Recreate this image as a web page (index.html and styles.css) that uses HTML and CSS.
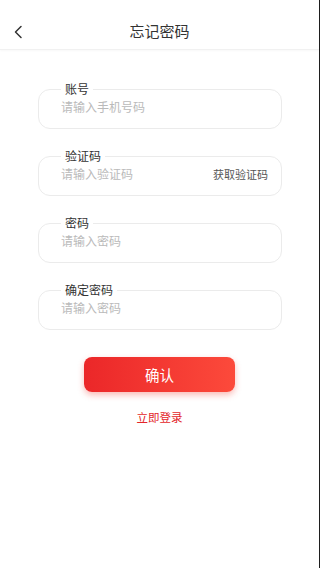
FILE: index.html
```html
<!DOCTYPE html>
<html lang="zh-CN">
<head>
    <meta charset="UTF-8">
    <meta name="viewport" content="width=device-width, initial-scale=1.0">
    <title>忘记密码</title>
    <link rel="stylesheet" href="styles.css">
</head>
<body>
    <div class="page">
        <!-- 顶部导航 -->
        <header class="nav-bar">
            <a class="back" href="#">
                <svg width="12" height="16" viewBox="0 0 12 16">
                    <polyline points="8,2.5 2.5,8 8,13.5" fill="none" stroke="#333" stroke-width="1.5" stroke-linecap="round" stroke-linejoin="round"/>
                </svg>
            </a>
            <h1 class="nav-title">忘记密码</h1>
        </header>

        <form class="form">
            <fieldset class="field">
                <legend>账号</legend>
                <div class="field-row">
                    <input type="text" placeholder="请输入手机号码">
                </div>
            </fieldset>

            <fieldset class="field">
                <legend>验证码</legend>
                <div class="field-row">
                    <input type="text" placeholder="请输入验证码">
                    <span class="get-code">获取验证码</span>
                </div>
            </fieldset>

            <fieldset class="field">
                <legend>密码</legend>
                <div class="field-row">
                    <input type="password" placeholder="请输入密码">
                </div>
            </fieldset>

            <fieldset class="field">
                <legend>确定密码</legend>
                <div class="field-row">
                    <input type="password" placeholder="请输入密码">
                </div>
            </fieldset>

            <button type="button" class="submit-btn">确认</button>
            <a class="login-link" href="#">立即登录</a>
        </form>
    </div>
</body>
</html>
```

FILE: styles.css
```css
body {
    margin: 0;
    font-family: "Noto Sans CJK SC", "Noto Sans", sans-serif;
    background-color: #fff;
    color: #333;
}

.page {
    min-height: 568px;
    border-right: 1px solid #1e1e1e;
    box-sizing: border-box;
}

/* 顶部导航 */
.nav-bar {
    height: 50px;
    display: flex;
    align-items: center;
    justify-content: center;
    position: relative;
    border-bottom: 1px solid #f1f1f1;
    box-shadow: 0 1px 2px rgba(0, 0, 0, 0.03);
    box-sizing: border-box;
    padding-top: 12px;
}

.back {
    position: absolute;
    left: 13px;
    top: 24px;
    display: flex;
}

.nav-title {
    margin: 0;
    font-size: 15px;
    font-weight: normal;
    color: #333;
    line-height: 20px;
}

/* 表单 */
.form {
    display: flex;
    flex-direction: column;
    padding-top: 32px;
}

.field {
    margin: 0 37px 20px 38px;
    padding: 0 13px 11px 22px;
    border: 1px solid #ebebeb;
    border-radius: 12px;
    min-width: 0;
}

.field legend {
    padding: 0 4px;
    font-size: 12px;
    line-height: 14px;
    color: #333;
}

.field-row {
    display: flex;
    align-items: center;
    height: 21px;
}

.field-row input {
    flex: 1;
    min-width: 0;
    border: none;
    outline: none;
    padding: 0;
    font-family: inherit;
    font-size: 12px;
    color: #333;
    background: transparent;
}

.field-row input::placeholder {
    color: #bababa;
}

.get-code {
    font-size: 11px;
    color: #555;
}

.submit-btn {
    align-self: center;
    margin-top: 7px;
    width: 151px;
    height: 35px;
    border: none;
    border-radius: 8px;
    background: linear-gradient(90deg, #eb2729, #fc4a3b);
    box-shadow: 0 3px 6px rgba(240, 60, 50, 0.35);
    color: #fff;
    font-family: inherit;
    font-size: 14.5px;
    cursor: pointer;
}

.login-link {
    align-self: center;
    margin-top: 17px;
    font-size: 11.5px;
    color: #e3262a;
    text-decoration: none;
}
```
